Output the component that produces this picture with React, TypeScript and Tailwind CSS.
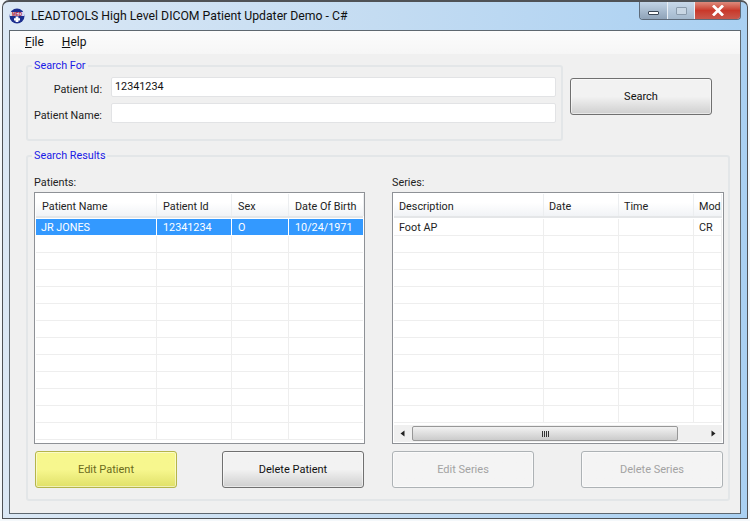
const UI_FONT = "font-['Roboto','Noto_Sans',sans-serif]";

const PATIENT_COLS = [
  { label: "Patient Name", w: "w-[121px]" },
  { label: "Patient Id", w: "w-[75px]" },
  { label: "Sex", w: "w-[57px]" },
  { label: "Date Of Birth", w: "w-[75px]" },
];

const SERIES_COLS = [
  { label: "Description", w: "w-[150px]" },
  { label: "Date", w: "w-[75px]" },
  { label: "Time", w: "w-[75px]" },
  { label: "Modality", w: "w-[28px]" },
];

type Col = { label: string; w: string };

function ListView({
  cols,
  rows,
  rowCount,
  selected,
  cellPad,
  children,
}: {
  cols: Col[];
  rows: string[][];
  rowCount: number;
  selected?: boolean;
  cellPad: string;
  children?: React.ReactNode;
}) {
  return (
    <div className="flex h-[252px] flex-col overflow-hidden border border-[#8e9196] bg-white p-[1px]">
      <div className="flex h-[24px] shrink-0 border-b-2 border-[#e4e6e8] bg-gradient-to-b from-white from-40% to-[#f1f3f6]">
        {cols.map((c) => (
          <div
            key={c.label}
            className={`${c.w} ${cellPad} shrink-0 overflow-hidden border-r border-[#eceef0] pt-[4px] text-[10.8px] leading-[18px] whitespace-nowrap text-[#222]`}
          >
            {c.label}
          </div>
        ))}
      </div>
      <div className="min-h-0 flex-1 overflow-hidden pt-[1px]">
        {Array.from({ length: rowCount }, (_, r) => {
          const row = rows[r];
          const sel = selected && r === 0;
          return (
            <div
              key={r}
              className={`flex h-[17px] border-b ${sel ? "border-white bg-[#3399ff] text-white" : "border-[#eeeeee] text-[#222]"}`}
            >
              {cols.map((c, i) => (
                <div
                  key={c.label}
                  className={`${c.w} ${sel ? "border-white" : "border-[#eeeeee]"} shrink-0 overflow-hidden border-r pt-[1px] text-[10.8px] leading-[15px] whitespace-nowrap ${i === 0 && sel ? "pl-[5px]" : cellPad}`}
                >
                  {row ? row[i] : ""}
                </div>
              ))}
            </div>
          );
        })}
      </div>
      {children}
    </div>
  );
}

function ActionButton({ label, variant }: { label: string; variant: "normal" | "hot" | "off" }) {
  const look = {
    normal: "border-[#707070] from-[#f2f2f2] from-50% to-[#cfcfcf] text-[#111]",
    hot: "border-[#b5b54a] from-[#f7f78e] from-50% to-[#e0e068] text-[#6b6b1c]",
    off: "border-[#adb2b5] from-[#f4f4f4] to-[#f4f4f4] text-[#a3a3a3]",
  }[variant];
  return (
    <button
      className={`h-[37px] w-[142px] rounded-[3px] border bg-gradient-to-b pt-[2px] text-[11px] shadow-[inset_0_0_0_1px_rgba(255,255,255,0.5)] ${look}`}
    >
      {label}
    </button>
  );
}

function GroupBox({ title, className, children }: { title: string; className: string; children: React.ReactNode }) {
  return (
    <div className={`relative rounded-[3px] border-2 border-[#e3e6e8] ${className}`}>
      <span className="absolute top-[-10px] left-[4px] bg-[#f0f0f0] px-[2px] text-[10.8px] leading-[18px] text-[#1a1ae6]">
        {title}
      </span>
      {children}
    </div>
  );
}

function Logo() {
  return (
    <svg width="16" height="16" viewBox="0 0 16 16" className="shrink-0">
      <circle cx="8" cy="8" r="7.5" fill="#1c2f8f" />
      <rect x="0.7" y="4" width="14.6" height="4" fill="#d8dcf0" />
      <text x="8" y="7.6" textAnchor="middle" fontSize="4.6" fontWeight="700" fill="#b01830" fontFamily="Liberation Sans">
        MED
      </text>
      <path d="M6.6 8.6h2.8v1.6H11v2.2H9.4V14H6.6v-1.6H5v-2.2h1.6z" fill="#fff" />
    </svg>
  );
}

export default function App() {
  return (
    <div className={`h-[521px] w-[750px] overflow-hidden bg-[#f4f8fb] px-[2px] pb-[2px] ${UI_FONT}`}>
      <div className="flex h-[519px] flex-col rounded-t-[7px] border-x border-t-2 border-b border-[#4f5256] bg-gradient-to-r from-[#dbe8f5] via-[#c4dcf2] to-[#a9d0f2] px-[6px] pb-[4px]">
        {/* Title bar */}
        <div className="flex h-[28px] shrink-0 items-start justify-between">
          <div className="flex items-center gap-[6px] pt-[5px]">
            <Logo />
            <span className="text-[12.25px] leading-[18px] whitespace-nowrap text-[#111]">
              LEADTOOLS High Level DICOM Patient Updater Demo - C#
            </span>
          </div>
          <div className="flex h-[18px] overflow-hidden rounded-b-[4px] border border-t-0 border-[#5e6b7a]">
            <div className="flex w-[28px] items-end justify-center border-r border-[#e8eef4] bg-gradient-to-b from-[#c2d4e6] to-[#8fa3b8] pb-[4px]">
              <div className="h-[4px] w-[11px] rounded-[1px] border border-[#3a4654] bg-white" />
            </div>
            <div className="flex w-[27px] items-center justify-center border-r border-[#e8eef4] bg-gradient-to-b from-[#c8d9ea] to-[#a4b9cd]">
              <div className="h-[8px] w-[11px] rounded-[1px] border border-[#8a9bac] bg-[#c9d7e4]" />
            </div>
            <div className="flex w-[45px] items-center justify-center bg-gradient-to-b from-[#dd8a7c] via-[#c9382a] to-[#c8584c]">
              <svg width="12" height="11" viewBox="0 0 12 11">
                <path d="M2 1.5 L10 9.5 M10 1.5 L2 9.5" stroke="#fff" strokeWidth="2.8" strokeLinecap="square" />
              </svg>
            </div>
          </div>
        </div>

        {/* Client area */}
        <div className="flex min-h-0 flex-1 flex-col border border-[#5e6870] bg-[#f0f0f0]">
          <div className="flex h-[23px] shrink-0 gap-[18px] bg-gradient-to-b from-[#fcfcfc] to-[#f6f6f6] pl-[15px] text-[12px] leading-[22px] text-[#111]">
            <span>
              <span className="underline">F</span>ile
            </span>
            <span>
              <span className="underline">H</span>elp
            </span>
          </div>

          {/* Search row */}
          <div className="mt-[11px] flex shrink-0 items-start pl-[16px]">
            <GroupBox title="Search For" className="h-[76px] w-[537px] pt-[10px] pr-[5px]">
              <div className="flex flex-col gap-[5px]">
                <div className="flex items-start">
                  <label className="mt-[5px] w-[77px] pr-[3px] text-right text-[10.8px] leading-[16px] whitespace-nowrap text-[#222]">Patient Id:</label>
                  <div className="ml-[6px] h-[20px] flex-1 rounded-[2px] border border-[#e2e3e5] bg-white pl-[3px] text-[10.8px] leading-[18px] text-[#111]">
                    12341234
                  </div>
                </div>
                <div className="flex items-start">
                  <label className="mt-[5px] w-[77px] pr-[3px] text-right text-[10.8px] leading-[16px] whitespace-nowrap text-[#222]">Patient Name:</label>
                  <div className="ml-[6px] h-[20px] flex-1 rounded-[2px] border border-[#e2e3e5] bg-white" />
                </div>
              </div>
            </GroupBox>
            <div className="mt-[13px] ml-[7px]">
              <ActionButton label="Search" variant="normal" />
            </div>
          </div>

          {/* Search results */}
          <div className="mt-[14px] shrink-0 pl-[16px]">
            <GroupBox title="Search Results" className="h-[346px] w-[704px] pt-[17px] pr-[4px] pl-[6px]">
              <div className="flex justify-between">
                <div className="w-[331px]">
                  <div className="h-[18px] pt-[1px] text-[10.8px] leading-[16px] text-[#222]">Patients:</div>
                  <ListView
                    cols={PATIENT_COLS}
                    rows={[["JR JONES", "12341234", "O", "10/24/1971"]]}
                    rowCount={13}
                    selected
                    cellPad="pl-[6px]"
                  />
                  <div className="mt-[7px] flex justify-between pr-[1px] pl-[1px]">
                    <ActionButton label="Edit Patient" variant="hot" />
                    <ActionButton label="Delete Patient" variant="normal" />
                  </div>
                </div>
                <div className="w-[332px]">
                  <div className="h-[18px] pt-[1px] text-[10.8px] leading-[16px] text-[#222]">Series:</div>
                  <ListView cols={SERIES_COLS} rows={[["Foot AP", "", "", "CR"]]} rowCount={12} cellPad="pl-[5px]">
                    <div className="flex h-[17px] shrink-0 items-center bg-[#f0f0f0]">
                      <svg width="18" height="17" viewBox="0 0 18 17">
                        <path d="M10.5 5.5 L6.5 8.5 L10.5 11.5 Z" fill="#222" />
                      </svg>
                      <div className="flex h-[15px] w-[266px] items-center justify-center rounded-[2px] border border-[#979797] bg-gradient-to-b from-[#f2f2f2] to-[#cbcbcb]">
                        <div className="h-[6px] w-[7px] bg-[repeating-linear-gradient(90deg,#333_0,#333_1px,transparent_1px,transparent_2px)]" />
                      </div>
                      <div className="flex-1" />
                      <svg width="18" height="17" viewBox="0 0 18 17">
                        <path d="M7.5 5.5 L11.5 8.5 L7.5 11.5 Z" fill="#222" />
                      </svg>
                    </div>
                  </ListView>
                  <div className="mt-[7px] flex justify-between pr-[1px]">
                    <ActionButton label="Edit Series" variant="off" />
                    <ActionButton label="Delete Series" variant="off" />
                  </div>
                </div>
              </div>
            </GroupBox>
          </div>
        </div>
      </div>
    </div>
  );
}
